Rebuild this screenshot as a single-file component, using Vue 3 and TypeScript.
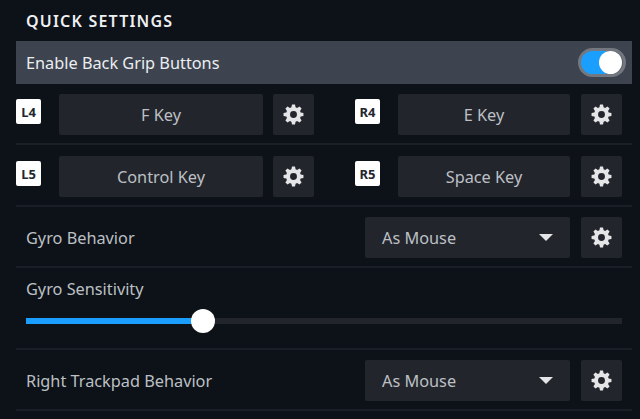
<script setup lang="ts">
// 8 tooth gear, same outline used on every settings button
function gearPath(): string {
  const teeth = 8
  const outer = 10.5
  const inner = 7.8
  const pts: string[] = []
  for (let i = 0; i < teeth; i++) {
    const a = (i / teeth) * Math.PI * 2 - Math.PI / 2
    const step = (Math.PI * 2) / teeth
    const list: [number, number][] = [
      [inner, a - step * 0.36],
      [outer, a - step * 0.19],
      [outer, a + step * 0.19],
      [inner, a + step * 0.36],
    ]
    for (const [r, t] of list) {
      pts.push(`${(12 + r * Math.cos(t)).toFixed(2)} ${(12 + r * Math.sin(t)).toFixed(2)}`)
    }
  }
  return "M" + pts.join("L") + "Z M12 8.4a3.6 3.6 0 1 0 0 7.2a3.6 3.6 0 1 0 0-7.2Z"
}

const gear = gearPath()

const keyRows = [
  [
    { badge: "L4", label: "F Key" },
    { badge: "R4", label: "E Key" },
  ],
  [
    { badge: "L5", label: "Control Key" },
    { badge: "R5", label: "Space Key" },
  ],
]

const sensitivity = 29.7
</script>

<template>
  <div class="panel">
    <div class="title">QUICK SETTINGS</div>

    <div class="toggle-row">
      <span>Enable Back Grip Buttons</span>
      <div class="toggle"><div class="toggle-knob"></div></div>
    </div>

    <div v-for="(row, i) in keyRows" :key="i" class="row key-row">
      <div v-for="item in row" :key="item.badge" class="key-side">
        <div class="badge">{{ item.badge }}</div>
        <div class="btn key-btn">{{ item.label }}</div>
        <div class="btn gear-btn">
          <svg viewBox="0 0 24 24" width="23" height="23"><path :d="gear" fill="#e4e5e6" fill-rule="evenodd" /></svg>
        </div>
      </div>
    </div>

    <div class="row setting-row">
      <span>Gyro Behavior</span>
      <div class="controls">
        <div class="btn select">
          <span>As Mouse</span>
          <i class="caret"></i>
        </div>
        <div class="btn gear-btn">
          <svg viewBox="0 0 24 24" width="23" height="23"><path :d="gear" fill="#e4e5e6" fill-rule="evenodd" /></svg>
        </div>
      </div>
    </div>

    <div class="row slider-row">
      <div class="slider-label">Gyro Sensitivity</div>
      <div class="slider">
        <div class="slider-fill" :style="{ width: sensitivity + '%' }"></div>
        <div class="slider-thumb"></div>
      </div>
    </div>

    <div class="row setting-row">
      <span>Right Trackpad Behavior</span>
      <div class="controls">
        <div class="btn select">
          <span>As Mouse</span>
          <i class="caret"></i>
        </div>
        <div class="btn gear-btn">
          <svg viewBox="0 0 24 24" width="23" height="23"><path :d="gear" fill="#e4e5e6" fill-rule="evenodd" /></svg>
        </div>
      </div>
    </div>
  </div>
</template>

<style>
html, body {
  margin: 0;
  background: #0d1118;
}
</style>

<style scoped>
.panel {
  width: 616px;
  height: 419px;
  padding-left: 16px;
  padding-right: 8px;
  background: #0d1118;
  color: #bcc0c4;
  font-family: "Noto Sans", sans-serif;
  font-size: 16.3px;
  overflow: hidden;
}

.title {
  height: 41px;
  padding: 10px 0 0 10px;
  box-sizing: border-box;
  color: #eef0f2;
  font-size: 16px;
  font-weight: 600;
  letter-spacing: 1.2px;
}

.toggle-row {
  height: 43px;
  padding: 0 6px 0 10px;
  display: flex;
  align-items: center;
  justify-content: space-between;
  background: #3d4450;
  color: #eceef0;
}

.toggle {
  width: 42px;
  height: 23px;
  border: 3px solid #737880;
  border-radius: 15px;
  background: linear-gradient(90deg, #1a9fff 60%, #5b5f66 60%);
  position: relative;
}

.toggle-knob {
  position: absolute;
  right: 1px;
  top: 0;
  width: 23px;
  height: 23px;
  border-radius: 50%;
  background: #fff;
}

.row {
  border-bottom: 2px solid #1a1e27;
  box-sizing: border-box;
}

.key-row {
  display: flex;
  height: 61px;
  padding-top: 10px;
}

.key-row + .key-row {
  padding-top: 11px;
  height: 62px;
}

.key-side {
  display: flex;
  align-items: flex-start;
}

.key-side:first-child {
  width: 339px;
}

.badge {
  width: 25px;
  height: 25px;
  margin-top: 5px;
  margin-right: 18px;
  border-radius: 2px;
  background: #fff;
  color: #23262e;
  font-size: 13px;
  font-weight: 700;
  display: flex;
  align-items: center;
  justify-content: center;
}

.btn {
  height: 41px;
  border-radius: 2px;
  background: #23252d;
  display: flex;
  align-items: center;
  box-sizing: border-box;
}

.key-btn {
  justify-content: center;
}

.key-side:first-child .key-btn {
  width: 204px;
}

.key-side:last-child .key-btn {
  width: 172px;
}

.key-side:last-child .gear-btn,
.controls .gear-btn {
  margin-left: 11px;
}

.gear-btn {
  width: 41px;
  margin-left: 10px;
  justify-content: center;
}

.setting-row {
  height: 61px;
  padding: 10px 10px 0 10px;
  display: flex;
  justify-content: space-between;
}

.setting-row > span {
  line-height: 43px;
}

.controls {
  display: flex;
}

.select {
  width: 205px;
  padding: 0 17px;
  justify-content: space-between;
}

.caret {
  width: 0;
  height: 0;
  border-left: 7px solid transparent;
  border-right: 7px solid transparent;
  border-top: 7px solid #e4e5e6;
}

.slider-row {
  height: 82px;
  padding: 12px 0 0 10px;
}

.slider-label {
  height: 26px;
  margin-bottom: 12px;
  line-height: 18px;
}

.slider {
  width: 596px;
  height: 6px;
  background: #23252d;
  position: relative;
  display: flex;
  align-items: center;
}

.slider-fill {
  height: 6px;
  background: #1a9fff;
}

.slider-thumb {
  width: 24px;
  height: 24px;
  margin-left: -12px;
  border-radius: 50%;
  background: #fff;
  flex: none;
}
</style>
